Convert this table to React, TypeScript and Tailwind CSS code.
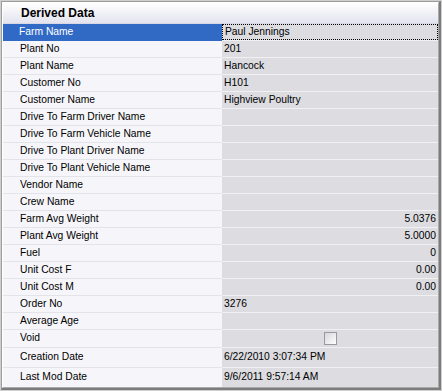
import React from "react";

type Row = { label: string; value?: string; align?: "left" | "right"; h: string; check?: boolean; last?: boolean };

const rows: Row[] = [
  { label: "Farm Name", value: "Paul Jennings", h: "h-[17px]" },
  { label: "Plant No", value: "201", h: "h-[17px]" },
  { label: "Plant Name", value: "Hancock", h: "h-[17px]" },
  { label: "Customer No", value: "H101", h: "h-[17px]" },
  { label: "Customer Name", value: "Highview Poultry", h: "h-[17px]" },
  { label: "Drive To Farm Driver Name", h: "h-[17px]" },
  { label: "Drive To Farm Vehicle Name", h: "h-[17px]" },
  { label: "Drive To Plant Driver Name", h: "h-[17px]" },
  { label: "Drive To Plant Vehicle Name", h: "h-[17px]" },
  { label: "Vendor Name", h: "h-[17px]" },
  { label: "Crew Name", h: "h-[17px]" },
  { label: "Farm Avg Weight", value: "5.0376", align: "right", h: "h-[17px]" },
  { label: "Plant Avg Weight", value: "5.0000", align: "right", h: "h-[17px]" },
  { label: "Fuel", value: "0", align: "right", h: "h-[17px]" },
  { label: "Unit Cost F", value: "0.00", align: "right", h: "h-[17px]" },
  { label: "Unit Cost M", value: "0.00", align: "right", h: "h-[17px]" },
  { label: "Order No", value: "3276", h: "h-[17px]" },
  { label: "Average Age", h: "h-[17px]" },
  { label: "Void", check: true, h: "h-[18px]" },
  { label: "Creation Date", value: "6/22/2010 3:07:34 PM", h: "h-[20px]" },
  { label: "Last Mod Date", value: "9/6/2011 9:57:14 AM", h: "h-[19px]", last: true },
];

export default function App() {
  return (
    <div
      className="w-[442px] h-[391px] border border-[#cfcfcf] bg-white"
      style={{ fontFamily: '"Liberation Sans", Arial, sans-serif' }}
    >
      <div className="w-full h-full border-t border-l border-[#9c9c9c] border-r-2 border-b-2 border-r-[#7c7c7c] border-b-[#7c7c7c]">
        <div className="w-full h-full flex flex-col border-t border-l border-white border-r border-b border-r-[#a9a9a9] border-b-[#a9a9a9] bg-[#dcdce1]">
          <div className="h-[21px] shrink-0 flex items-center pl-[18px] bg-gradient-to-b from-[#ffffff] to-[#e3e3ef] border-b border-[#d8d8e4]">
            <span className="text-[12px] font-bold text-black leading-none">Derived Data</span>
          </div>
          {rows.map((r, i) => {
            const selected = i === 0;
            return (
              <div key={r.label} className={`flex shrink-0 ${r.h}`}>
                <div
                  className={`w-[219px] shrink-0 flex items-center pl-[17px] text-[10.3px] leading-none ${
                    r.last ? "" : "border-b"
                  } ${
                    selected
                      ? "bg-[#316ac5] text-white border-[#316ac5]"
                      : "bg-[#f6f6fa] text-black border-[#e3e3ea]"
                  }`}
                >
                  <span className={selected ? "ml-[-1px]" : ""}>{r.label}</span>
                </div>
                <div
                  className={`flex-1 min-w-0 bg-[#dcdce1] text-black text-[10.3px] leading-none ${
                    r.last ? "" : "border-b border-[#f1f1f4]"
                  }`}
                >
                  <div
                    className={`h-full flex items-center ${
                      r.check ? "justify-center" : r.align === "right" ? "justify-end pr-[2px]" : "pl-[2px]"
                    } ${selected ? "border border-dotted border-black" : ""}`}
                  >
                    {r.check ? (
                      <div className="w-[13px] h-[13px] border border-[#9a9a9a] bg-gradient-to-br from-[#d6d6de] to-[#ffffff]" />
                    ) : (
                      <span>{r.value}</span>
                    )}
                  </div>
                </div>
              </div>
            );
          })}
        </div>
      </div>
    </div>
  );
}
